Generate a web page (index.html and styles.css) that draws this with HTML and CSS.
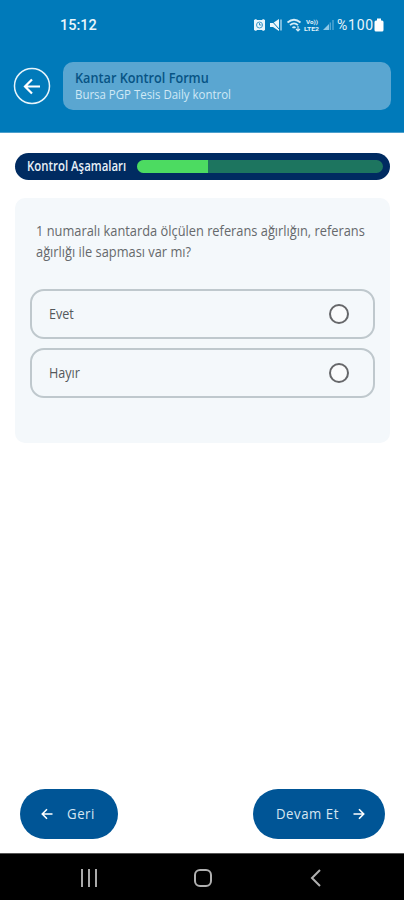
FILE: index.html
```html
<!DOCTYPE html>
<html lang="tr">
<head>
<meta charset="utf-8">
<title>Kantar Kontrol Formu</title>
<link rel="stylesheet" href="styles.css">
</head>
<body>
<div class="screen">
  <header class="header">
    <div class="status">
      <span class="clock">15:12</span>
      <div class="indicators">
        <svg class="sys-icons" width="80" height="14" viewBox="0 0 80 14">
          <path fill="#e9f6fc" d="M0 2l2-1 1 1h5l1-1 2 1v10l-2 1-1-1H3l-1 1-2-1z"/>
          <circle cx="5.500" cy="7" r="3" fill="#e9f6fc" stroke="#3c9aca" stroke-width="1"/>
          <path d="M5.500 5v2h2" fill="none" stroke="#0878b8" stroke-width=".8"/>
          <path fill="#e9f6fc" d="M16 5h3l6-4v12l-6-4h-3z"/>
          <path d="M16.500 1.500l9 10" stroke="#0878b8" stroke-width="1"/>
          <path d="M27 1.500v11" stroke="#b9ddf0" stroke-width="1.300"/>
          <g fill="none" stroke="#d5edf8" stroke-width="1.700">
            <path d="M33.500 4.500q6.500-5.500 13 0M36 7.200q4-3.500 8 0M38.500 9.800q1.500-1.500 3 0"/>
            <path d="M44 8v5M42 11l2 2 2-2" stroke-width="1.100"/>
          </g>
          <text x="52" y="6.200" class="volte" textLength="12" lengthAdjust="spacingAndGlyphs">Vo))</text>
          <text x="50" y="13" class="volte" textLength="15" lengthAdjust="spacingAndGlyphs">LTE2</text>
          <path fill="#8fc8e6" d="M69 12l6-6v6z"/>
          <path d="M76.300 4.500V12M79 2V12" stroke="#5aabd6" stroke-width="1.300"/>
        </svg>
        <span class="percent">%100</span>
        <svg class="battery" width="10" height="14" viewBox="0 0 10 14"><path fill="#fff" d="M3 .5h4v2h1q1.500 0 1.500 1.500v8q0 1.500-1.500 1.500H2q-1.500 0-1.500-1.500V4q0-1.500 1.500-1.500h1z"/></svg>
      </div>
    </div>
    <div class="titlebar">
      <svg class="back" width="38" height="38" viewBox="0 0 38 38" fill="none" stroke="#e6f4fb">
        <circle cx="19" cy="19" r="17.500" stroke-width="1.500"/>
        <path d="M27 19.500H12.500M19 12.500l-7 7 7 7" stroke="#fff" stroke-width="2.200"/>
      </svg>
      <div class="title-card">
        <div class="title"><span>Kantar Kontrol Formu</span></div>
        <div class="subtitle"><span>Bursa PGP Tesis Daily kontrol</span></div>
      </div>
    </div>
  </header>
  <main class="content">
    <div class="stages">
      <span class="stages-label">Kontrol Aşamaları</span>
      <div class="track"><div class="fill"></div></div>
    </div>
    <section class="question">
      <p class="prompt"><span>1 numaralı kantarda ölçülen referans ağırlığın, referans</span><span>ağırlığı ile sapması var mı?</span></p>
      <div class="option"><span>Evet</span><i class="radio"></i></div>
      <div class="option"><span>Hayır</span><i class="radio"></i></div>
    </section>
  </main>
  <footer class="actions">
    <div class="button prev">
      <svg width="12" height="12" viewBox="0 0 12 12" fill="none" stroke="#fff" stroke-width="1.600"><path d="M11.500 6H1.500M6 1.300L1.300 6 6 10.700"/></svg>
      <span>Geri</span>
    </div>
    <div class="button next">
      <span>Devam Et</span>
      <svg width="12" height="12" viewBox="0 0 12 12" fill="none" stroke="#fff" stroke-width="1.600"><path d="M.5 6h10M6 1.300L10.700 6 6 10.700"/></svg>
    </div>
  </footer>
  <nav class="navbar">
    <svg width="18" height="18" viewBox="0 0 18 18" stroke="#aaa" stroke-width="2"><path d="M2 0v18M9 0v18M16 0v18"/></svg>
    <svg width="18" height="18" viewBox="0 0 18 18" fill="none" stroke="#b0b0b0" stroke-width="2"><rect x="1" y="1" width="16" height="16" rx="5"/></svg>
    <svg width="18" height="18" viewBox="0 0 18 18" fill="none" stroke="#b0b0b0" stroke-width="2"><path d="M13 1L5 9l8 8"/></svg>
  </nav>
</div>
</body>
</html>
```
FILE: styles.css
```css
* { box-sizing: border-box; }
body { margin: 0; font-family: "Open Sans", "Noto Sans", sans-serif; }
svg { display: block; flex: none; }
span { display: inline-block; white-space: nowrap; transform-origin: left center; }
.screen { width: 404px; height: 900px; background: #fff; display: flex; flex-direction: column; overflow: hidden; }
.header { height: 133px; background: #007aba; border-bottom: 1px solid #4c9fcc; }
.status { height: 50px; padding: 0 20px 0 60px; display: flex; align-items: center; justify-content: space-between; color: #e9f6fc; font-family: Roboto, sans-serif; }
.clock { font-size: 14.500px; font-weight: 500; }
.indicators { display: flex; align-items: center; }
.percent { font-size: 14px; margin-left: 3px; letter-spacing: .8px; }
.volte { font: 700 5px Roboto, sans-serif; fill: #e2f3fb; }
.titlebar { display: flex; align-items: center; padding: 12px 13px 0; gap: 12px; }
.title-card { width: 328px; height: 48px; border-radius: 10px; background: #5aa6d1; padding: 7px 12px; }
.title { font-size: 14.500px; line-height: 17px; font-weight: 600; color: #075485; }
.title span { transform: scaleX(.875); }
.subtitle { font-size: 13px; line-height: 16px; color: #d0e9f6; }
.subtitle span { transform: scaleX(.88); }
.content { padding: 20px 14px 0 15px; }
.stages { height: 27px; border-radius: 14px; background: #002b61; display: flex; align-items: center; padding: 0 7px 0 12px; }
.stages-label { width: 110px; flex: none; color: #e8f0f7; font-size: 13.500px; font-weight: 600; margin-top: -2px; transform: scaleX(.845); }
.track { width: 246px; height: 13px; border-radius: 7px; background: #1d755f; overflow: hidden; }
.fill { width: 71px; height: 100%; background: #4cdb61; }
.question { margin-top: 18px; height: 245px; border-radius: 10px; background: #f4f8fb; padding: 23px 15px 0; }
.prompt { margin: 0 0 27px 6px; font-size: 14px; line-height: 20.500px; color: #66696c; display: flex; flex-direction: column; align-items: flex-start; }
.prompt span { transform: scaleX(.916); }
.option { height: 50px; margin-bottom: 9px; width: 345px; border: 2px solid #bfc8cd; border-radius: 14px; display: flex; align-items: center; justify-content: space-between; padding: 0 24px 0 17px; font-size: 14px; color: #54585b; }
.option span { transform: scaleX(.9); margin-top: -2px; }
.radio { width: 20px; height: 20px; border: 2px solid #66676a; border-radius: 50%; background: #fafbfc; }
.actions { margin-top: auto; padding: 0 19px 14px 20px; display: flex; justify-content: space-between; }
.button { height: 50px; border-radius: 25px; background: #005596; color: #d6e6f2; display: flex; align-items: center; font-size: 14.500px; font-weight: 500; letter-spacing: .6px; }
.button span { transform: scaleX(.91); margin-top: -1px; }
.prev { width: 98px; padding-left: 21px; gap: 14px; }
.next { width: 132px; padding: 0 20px 0 23px; justify-content: space-between; }
.navbar { height: 47px; background: #000; border-top: 1px solid #555; display: flex; justify-content: space-between; padding: 15px 79px 0 80px; }
```
